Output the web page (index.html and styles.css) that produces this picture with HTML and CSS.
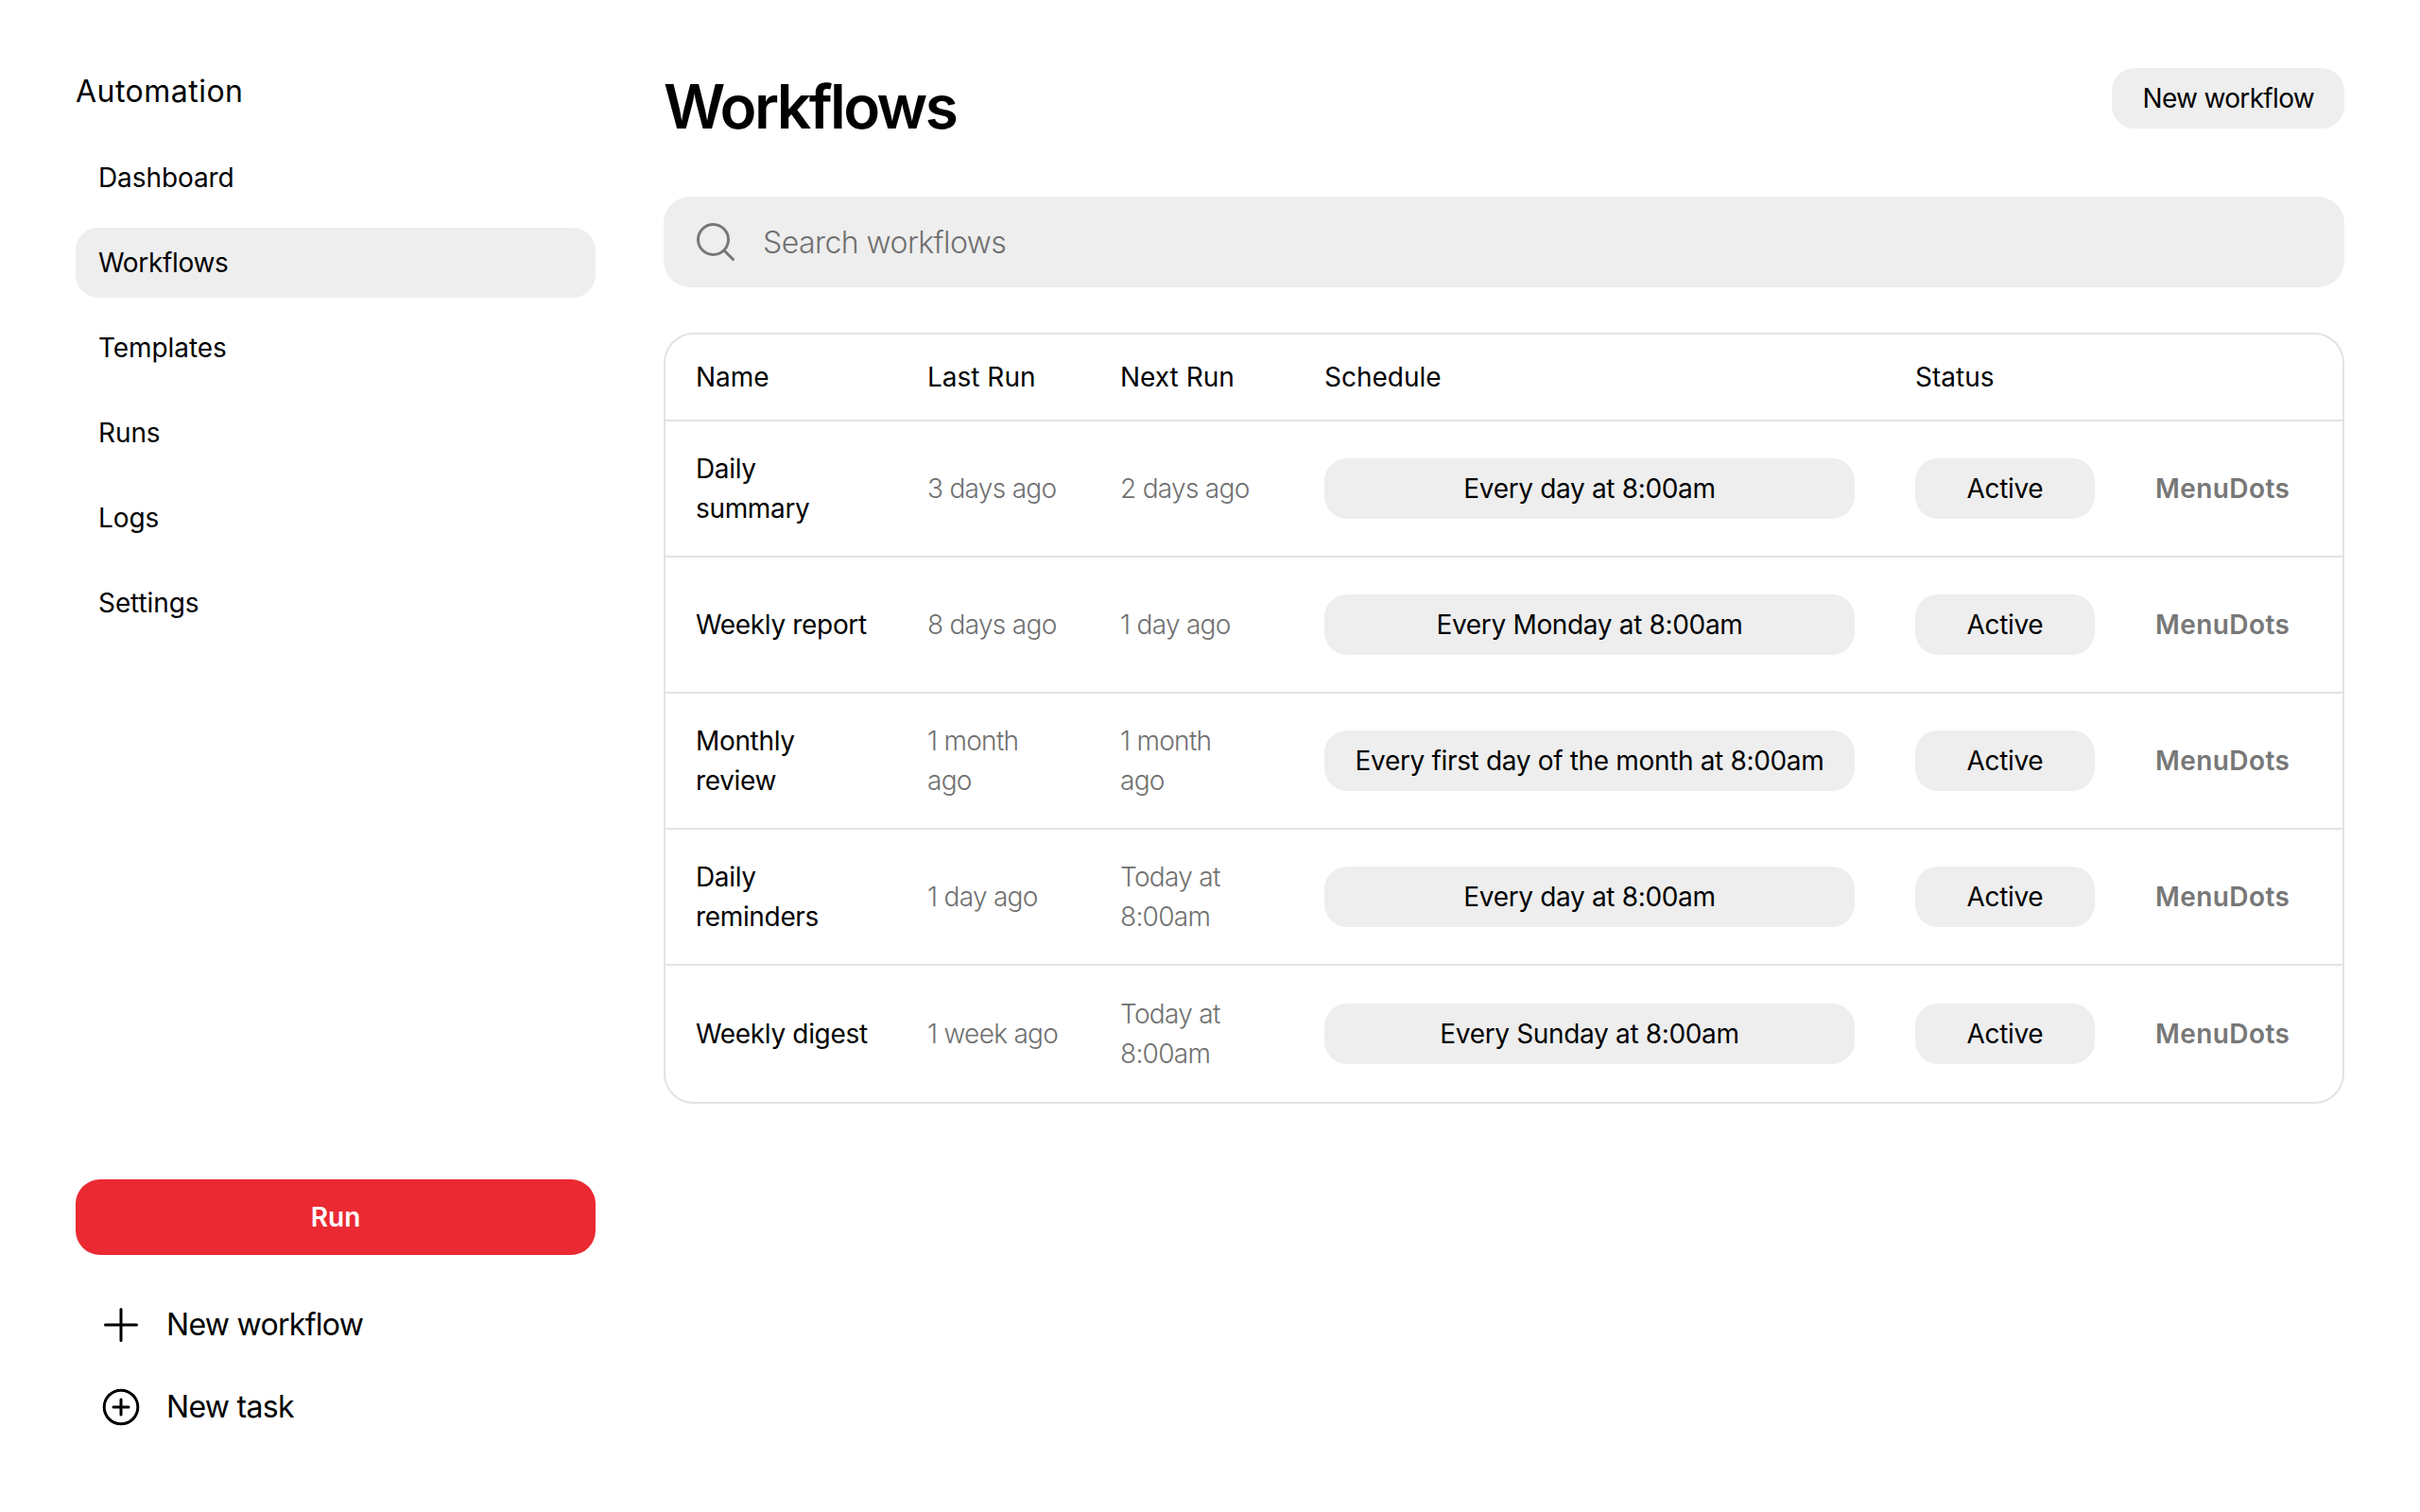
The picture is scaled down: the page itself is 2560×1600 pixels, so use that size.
FILE: index.html
```html
<!DOCTYPE html>
<html lang="en">
<head>
    <meta charset="UTF-8">
    <meta name="viewport" content="width=device-width, initial-scale=1.0">
    <title>Workflows</title>
    <link rel="stylesheet" href="styles.css">
</head>
<body>
    <div class="page">
        <aside class="sidebar">
            <div class="brand">Automation</div>
            <nav class="nav">
                <a class="nav-item">Dashboard</a>
                <a class="nav-item active">Workflows</a>
                <a class="nav-item">Templates</a>
                <a class="nav-item">Runs</a>
                <a class="nav-item">Logs</a>
                <a class="nav-item">Settings</a>
            </nav>
            <div class="side-actions">
                <button class="run-button">Run</button>
                <a class="side-link">
                    <svg class="side-icon" viewBox="0 0 40 40" fill="none" stroke="#000" stroke-width="3" stroke-linecap="round"><path d="M20 3.5V36.5M3.5 20H36.5"/></svg>
                    New workflow
                </a>
                <a class="side-link">
                    <svg class="side-icon" viewBox="0 0 40 40" fill="none" stroke="#000" stroke-width="3" stroke-linecap="round"><circle cx="20" cy="20" r="17.8"/><path d="M20 12V28M12 20H28"/></svg>
                    New task
                </a>
            </div>
        </aside>
        <main class="main">
            <header class="top">
                <h1>Workflows</h1>
                <button class="new-button">New workflow</button>
            </header>
            <div class="search">
                <svg class="search-icon" viewBox="0 0 40 40" fill="none" stroke="#777" stroke-width="3" stroke-linecap="round"><circle cx="17.5" cy="17.5" r="16"/><path d="M29 29L38.5 38.5"/></svg>
                <span>Search workflows</span>
            </div>
            <div class="table-wrap">
                <table class="table">
                    <colgroup>
                        <col class="col-name">
                        <col class="col-last">
                        <col class="col-next">
                        <col class="col-schedule">
                        <col class="col-status">
                        <col>
                    </colgroup>
                    <thead>
                        <tr>
                            <th>Name</th>
                            <th>Last Run</th>
                            <th>Next Run</th>
                            <th>Schedule</th>
                            <th>Status</th>
                            <th></th>
                        </tr>
                    </thead>
                    <tbody>
                        <tr>
                            <td>Daily<br>summary</td>
                            <td class="muted">3 days ago</td>
                            <td class="muted">2 days ago</td>
                            <td><span class="pill">Every day at 8:00am</span></td>
                            <td><span class="pill">Active</span></td>
                            <td class="menu">MenuDots</td>
                        </tr>
                        <tr>
                            <td>Weekly report</td>
                            <td class="muted">8 days ago</td>
                            <td class="muted">1 day ago</td>
                            <td><span class="pill">Every Monday at 8:00am</span></td>
                            <td><span class="pill">Active</span></td>
                            <td class="menu">MenuDots</td>
                        </tr>
                        <tr>
                            <td>Monthly<br>review</td>
                            <td class="muted">1 month<br>ago</td>
                            <td class="muted">1 month<br>ago</td>
                            <td><span class="pill">Every first day of the month at 8:00am</span></td>
                            <td><span class="pill">Active</span></td>
                            <td class="menu">MenuDots</td>
                        </tr>
                        <tr>
                            <td>Daily<br>reminders</td>
                            <td class="muted">1 day ago</td>
                            <td class="muted">Today at<br>8:00am</td>
                            <td><span class="pill">Every day at 8:00am</span></td>
                            <td><span class="pill">Active</span></td>
                            <td class="menu">MenuDots</td>
                        </tr>
                        <tr>
                            <td>Weekly digest</td>
                            <td class="muted">1 week ago</td>
                            <td class="muted">Today at<br>8:00am</td>
                            <td><span class="pill">Every Sunday at 8:00am</span></td>
                            <td><span class="pill">Active</span></td>
                            <td class="menu">MenuDots</td>
                        </tr>
                    </tbody>
                </table>
            </div>
        </main>
    </div>
</body>
</html>
```

FILE: styles.css
```css
* {
    box-sizing: border-box;
    margin: 0;
    padding: 0;
}
body {
    background: #fff;
    color: #000;
    font-family: Inter, "Noto Sans", sans-serif;
    font-size: 28px;
    letter-spacing: -0.012em;
}
.page {
    display: flex;
    gap: 72px;
    height: 100vh;
    padding: 72px 80px 68px;
}
.sidebar {
    display: flex;
    flex-direction: column;
    flex: 0 0 550px;
}
.brand {
    font-size: 32px;
    line-height: 50px;
    margin-bottom: 29px;
    letter-spacing: 0.015em;
}
.nav {
    display: flex;
    flex-direction: column;
    gap: 16px;
}
.nav-item {
    display: flex;
    align-items: center;
    height: 74px;
    padding-left: 24px;
    border-radius: 24px;
    letter-spacing: -0.003em;
}
.nav-item.active {
    background: #eee;
    letter-spacing: -0.012em;
}
.side-actions {
    display: flex;
    flex-direction: column;
    margin-top: auto;
}
.run-button {
    height: 80px;
    margin-bottom: 30px;
    background: #eb2933;
    color: #fff;
    border: none;
    border-radius: 26px;
    font: inherit;
    font-weight: 600;
}
.side-link {
    display: flex;
    align-items: center;
    gap: 28px;
    height: 87px;
    padding-left: 28px;
    font-size: 32px;
    letter-spacing: -0.022em;
}
.side-icon {
    width: 40px;
    height: 40px;
}
.main {
    display: flex;
    flex-direction: column;
    flex: 1;
    min-width: 0;
}
.top {
    display: flex;
    justify-content: space-between;
    align-items: flex-start;
    height: 135px;
}
h1 {
    font-size: 64px;
    font-weight: 600;
    line-height: 82px;
    letter-spacing: -0.04em;
}
.new-button {
    height: 64px;
    padding: 0 32px;
    background: #eee;
    border: none;
    border-radius: 24px;
    font: inherit;
    letter-spacing: -0.024em;
}
.search {
    display: flex;
    align-items: center;
    gap: 30px;
    height: 96px;
    margin-top: 1px;
    padding-left: 35px;
    background: #eee;
    border-radius: 28px;
    color: #707070;
    font-size: 32px;
    font-weight: 300;
    letter-spacing: -0.017em;
}
.search-icon {
    width: 40px;
    height: 40px;
}
.table-wrap {
    margin-top: 48px;
    border: 2px solid #e3e3e3;
    border-radius: 32px;
    overflow: hidden;
}
.table {
    width: 100%;
    border-collapse: collapse;
    table-layout: fixed;
}
.col-name { width: 245px; }
.col-last { width: 204px; }
.col-next { width: 216px; }
.col-schedule { width: 625px; }
.col-status { width: 254px; }
th {
    height: 91px;
    padding: 0 32px;
    font-weight: 400;
    text-align: left;
    letter-spacing: 0;
}
td {
    height: 144px;
    padding: 0 0 0 32px;
    line-height: 42px;
    border-top: 2px solid #e3e3e3;
}
tr:last-child td {
    height: 145px;
}
td:nth-child(4), td:nth-child(5) {
    padding-right: 32px;
}
.muted {
    color: #707070;
    font-weight: 300;
    letter-spacing: -0.025em;
}
.pill {
    display: flex;
    justify-content: center;
    align-items: center;
    height: 64px;
    background: #eee;
    border-radius: 24px;
    white-space: nowrap;
}
.menu {
    color: #777;
    font-weight: 600;
    letter-spacing: 0.015em;
}
```
